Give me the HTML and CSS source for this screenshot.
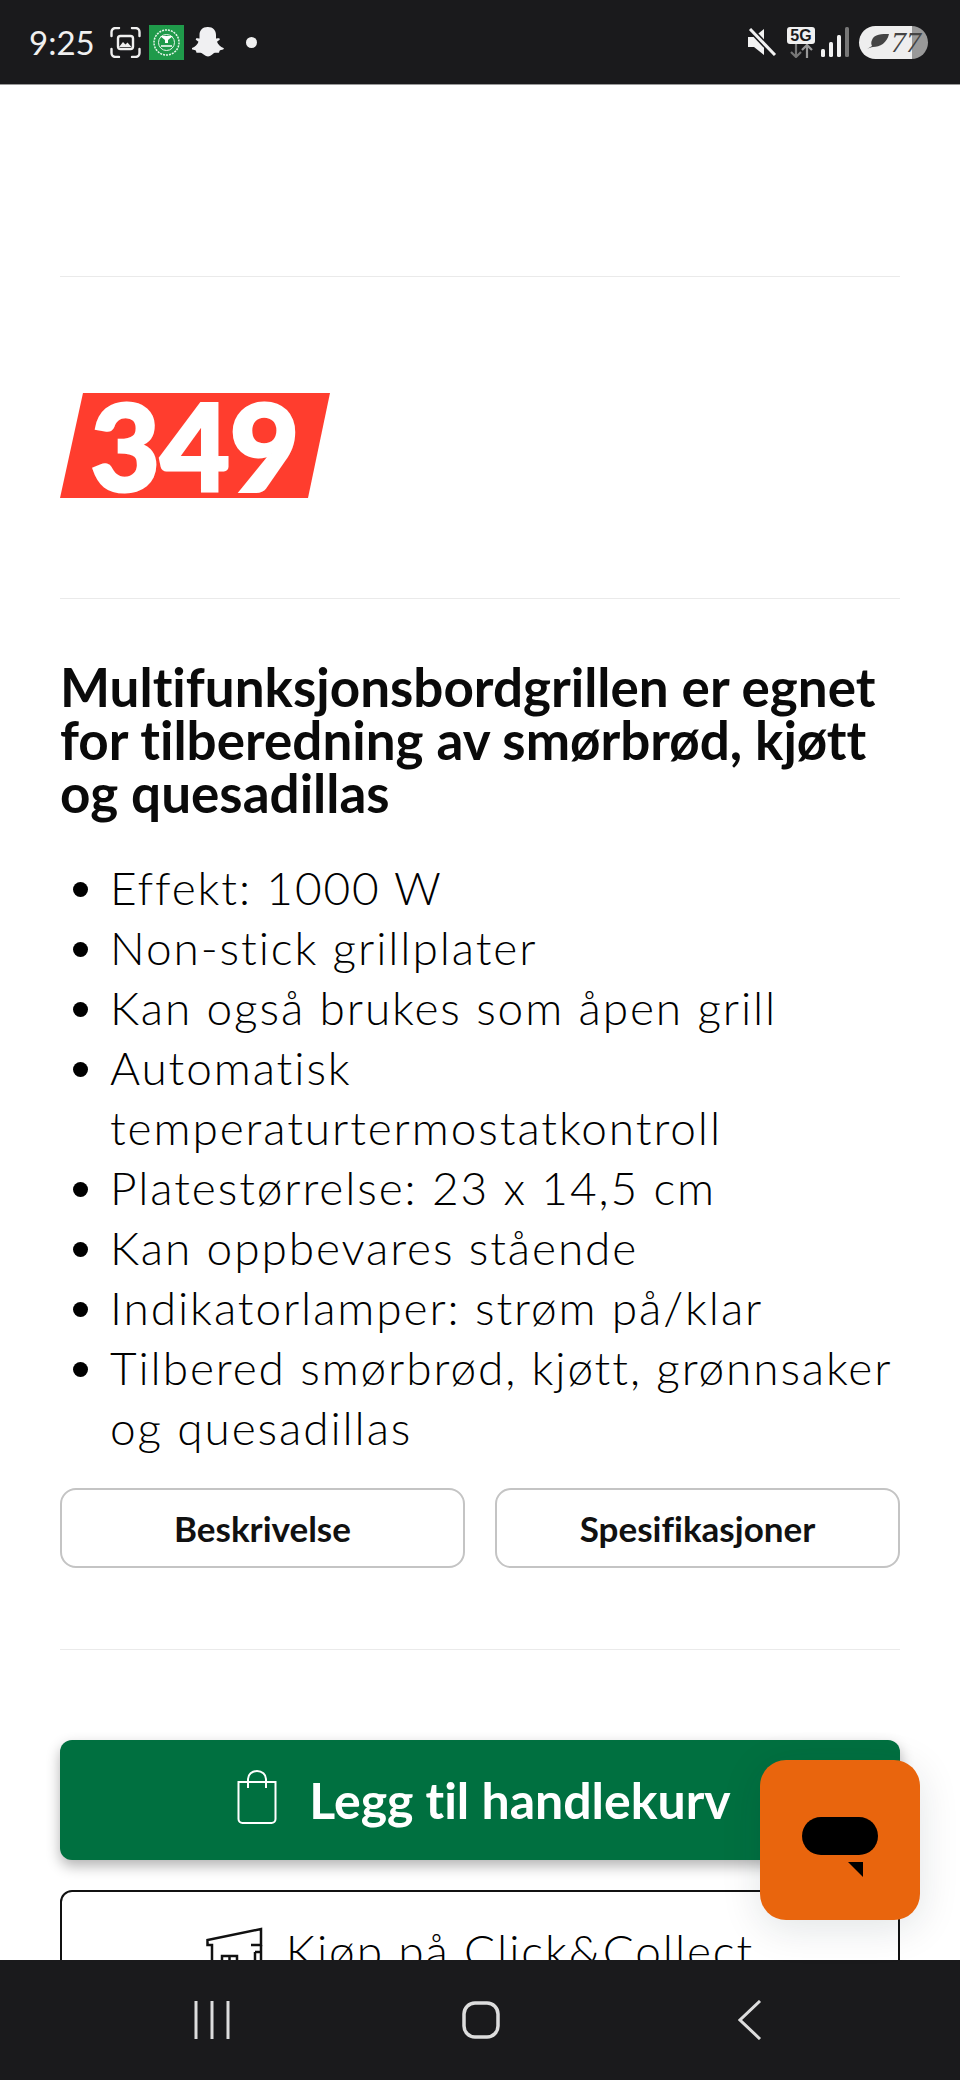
FILE: index.html
```html
<!DOCTYPE html>
<html lang="en">
<head>
    <meta charset="UTF-8">
    <meta name="viewport" content="width=device-width, initial-scale=1.0">
    <title>Multifunksjonsbordgrill</title>
    <link rel="stylesheet" href="styles.css">
</head>
<body>
    <!-- Status bar -->
    <div class="statusBar">
        <div class="statusLeft">
            <span class="time">9:25</span>
            <svg class="shotIcon" width="31" height="31" viewBox="0 0 31 31" fill="none" stroke="#f0f0f0" stroke-width="2.4" stroke-linecap="round">
                <path d="M1.5 9V5a4 4 0 0 1 4-4H9M22 1h3.5a4 4 0 0 1 4 4v4M29.5 22v4a4 4 0 0 1-4 4H22M9 30H5.5a4 4 0 0 1-4-4v-4"/>
                <rect x="8" y="9" width="15" height="13" rx="2.5"/>
                <path d="M9 20l4-5 2.5 2.5 2-2 4 4.500z" fill="#f0f0f0" stroke="none"/>
            </svg>
            <svg class="appIcon" width="35" height="35" viewBox="0 0 35 35">
                <rect width="35" height="35" fill="#1f9a4a"/>
                <circle cx="17.500" cy="17.500" r="12.500" fill="none" stroke="#e8f5ec" stroke-width="1.500" stroke-dasharray="2 1"/>
                <circle cx="17.500" cy="17.500" r="8" fill="none" stroke="#e8f5ec" stroke-width="1"/>
                <path d="M11 11h13l-5 4v3h-3v-3z" fill="#fff"/>
                <path d="M12 21h11" stroke="#fff" stroke-width="1.500"/>
            </svg>
            <svg class="snapIcon" width="32" height="30" viewBox="0 0 32 30">
                <path d="M16 0c5 0 8 3.500 8 8v3.500c1.500.3 3-.8 3.700.4.600 1.200-2 2-2.700 2.800 1 3 3.500 5.200 6.500 6.300.6.300.4 1.200-.4 1.500-1.300.6-3 .6-3.500 1.200-.4.600-.2 1.800-.9 2-1.300.3-3-.4-4.700.4C20.500 27 19 29.500 16 29.500S11.500 27 9.500 26.100c-1.700-.8-3.400-.1-4.700-.4-.7-.2-.5-1.400-.9-2-.5-.6-2.200-.6-3.500-1.200-.8-.3-1-1.200-.4-1.500 3-1.100 5.500-3.300 6.500-6.300-.7-.8-3.300-1.600-2.700-2.800.7-1.200 2.200-.1 3.700-.4V8c0-4.500 3-8 8-8z" fill="#f0f0f2"/>
            </svg>
            <span class="dot"></span>
        </div>
        <div class="statusRight">
            <svg class="muteIcon" width="30" height="28" viewBox="0 0 30 28">
                <path d="M1 9h6l10-8v26L7 19H1z" fill="#f2f2f2"/>
                <path d="M3 1l25 26" stroke="#1a1a1c" stroke-width="6"/>
                <path d="M3 1l25 26" stroke="#f2f2f2" stroke-width="3"/>
            </svg>
            <div class="netIcon">
                <span class="fiveG">5G</span>
                <svg width="28" height="14" viewBox="0 0 28 14" fill="none" stroke-width="2.200">
                    <path d="M9 0v13M4 8l5 5 5-5" stroke="#777"/>
                    <path d="M20 14V1M15 6l5-5 5 5" stroke="#999"/>
                </svg>
            </div>
            <svg class="signalIcon" width="28" height="30" viewBox="0 0 28 30">
                <rect x="0" y="22" width="4" height="8" rx="1.500" fill="#f2f2f2"/>
                <rect x="8" y="15" width="4" height="15" rx="1.500" fill="#f2f2f2"/>
                <rect x="16" y="8" width="4" height="22" rx="1.500" fill="#f2f2f2"/>
                <rect x="24" y="0" width="4" height="30" rx="1.500" fill="#777"/>
            </svg>
            <div class="battery">
                <svg width="24" height="16" viewBox="0 0 24 16">
                    <path d="M1 15c2-1 4-2 6-2 7 0 14-4 16-13-7 0-15 0-17 6-1 2-1 4 0 6z" fill="#444"/>
                </svg>
                <span class="batteryLevel">77</span>
            </div>
        </div>
    </div>

    <!-- Page content -->
    <div class="content">
        <hr class="rule firstRule">
        <div class="priceTag">349</div>
        <hr class="rule">
        <h1>Multifunksjonsbordgrillen er egnet for tilberedning av smørbrød, kjøtt og quesadillas</h1>
        <ul class="features">
            <li>Effekt: 1000 W</li>
            <li>Non-stick grillplater</li>
            <li>Kan også brukes som åpen grill</li>
            <li>Automatisk temperaturtermostatkontroll</li>
            <li>Platestørrelse: 23 x 14,5 cm</li>
            <li>Kan oppbevares stående</li>
            <li>Indikatorlamper: strøm på/klar</li>
            <li>Tilbered smørbrød, kjøtt, grønnsaker og quesadillas</li>
        </ul>
        <div class="infoButtons">
            <button>Beskrivelse</button>
            <button>Spesifikasjoner</button>
        </div>
        <hr class="rule buyRule">
        <button class="buyButton">
            <svg class="bagIcon" width="40" height="54" viewBox="0 0 40 54" fill="none" stroke="#fff" stroke-width="2">
                <path d="M1.500 12h37v37a4 4 0 0 1-4 4h-29a4 4 0 0 1-4-4z"/>
                <path d="M11 18V9a9 8 0 0 1 18 0v9"/>
            </svg>
            Legg til handlekurv
        </button>
        <button class="collectButton">
            <svg width="57" height="48" viewBox="0 0 57 48" fill="none" stroke="#111" stroke-width="2.500">
                <path d="M6 48V19H1.500v-5L55 3v16H45"/>
                <path d="M55 19v29M49 26h6M49 26v22M16 48V30h15v18M23.500 30v18"/>
            </svg>
            Kjøp på Click&amp;Collect
        </button>
    </div>

    <!-- Navigation bar -->
    <div class="navBar">
        <svg width="36" height="38" viewBox="0 0 36 38" stroke="#ddd" stroke-width="3">
            <path d="M2 0v38M18 0v38M34 0v38"/>
        </svg>
        <svg class="homeIcon" width="38" height="38" viewBox="0 0 38 38" fill="none" stroke="#ddd" stroke-width="3.500">
            <rect x="2" y="2" width="34" height="34" rx="11"/>
        </svg>
        <svg width="24" height="40" viewBox="0 0 24 40" fill="none" stroke="#ddd" stroke-width="3">
            <path d="M22 1L2 20l20 19"/>
        </svg>
    </div>

    <!-- Chat button -->
    <div class="chatButton">
        <svg width="76" height="62" viewBox="0 0 76 62">
            <rect x="0" y="0" width="76" height="38" rx="19"/>
            <path d="M46 45h15v15z"/>
        </svg>
    </div>
</body>
</html>
```

FILE: styles.css
```css
/* General Styles */
body {
    font-family: 'Lato', sans-serif;
    font-variant-ligatures: none;
    margin: 0;
    width: 960px;
    height: 2080px;
    display: flex;
    flex-direction: column;
    overflow: hidden;
    background: #fff;
    color: #111;
    position: relative;
}

/* Status bar */
.statusBar {
    height: 85px;
    flex-shrink: 0;
    background: #1a1a1c;
    border-bottom: 1px solid #999;
    box-sizing: border-box;
    display: flex;
    justify-content: space-between;
    align-items: center;
    padding: 0 32px 0 29px;
}

.statusLeft,
.statusRight {
    display: flex;
    align-items: center;
}

.time {
    font-size: 33px;
    color: #f0f0f0;
    width: 81px;
}

.appIcon {
    margin-left: 8px;
}

.snapIcon {
    margin-left: 8px;
}

.dot {
    width: 11px;
    height: 11px;
    border-radius: 50%;
    background: #f0f0f0;
    margin-left: 22px;
}

.netIcon {
    display: flex;
    flex-direction: column;
    align-items: center;
    margin-left: 10px;
}

.fiveG {
    background: #f0f0f0;
    color: #1a1a1c;
    font-family: 'Liberation Sans', sans-serif;
    font-weight: 700;
    font-size: 16px;
    line-height: 17px;
    width: 28px;
    text-align: center;
    border-radius: 3px;
}

.signalIcon {
    margin-left: 6px;
}

.battery {
    width: 69px;
    height: 33px;
    margin-left: 10px;
    border-radius: 17px;
    background: linear-gradient(to right, #eee 53px, #999 53px);
    display: flex;
    align-items: center;
    justify-content: center;
    gap: 1px;
    color: #444;
}

.batteryLevel {
    font-family: 'Liberation Serif', serif;
    font-style: italic;
    font-size: 30px;
    line-height: 1;
}

/* Page content */
.content {
    flex: 1;
    min-height: 0;
    overflow: hidden;
    padding: 0 60px;
}

.rule {
    border: none;
    border-top: 1px solid #eaeaea;
    margin: 0;
}

.firstRule {
    margin-top: 191px;
}

.priceTag {
    width: 270px;
    height: 105px;
    margin: 116px 0 100px;
    background: #ff3d2e;
    clip-path: polygon(23px 0, 270px 0, 248px 100%, 0 100%);
    color: #fff;
    font-weight: 900;
    font-size: 120px;
    -webkit-text-stroke: 3px #fff;
    line-height: 105px;
    text-align: center;
}

h1 {
    font-weight: 700;
    font-size: 53px;
    line-height: 53px;
    margin: 61px 0 39px;
    color: #0a0a0a;
}

.features {
    font-size: 46px;
    font-weight: 300;
    letter-spacing: 1.9px;
    color: #000;
    line-height: 60px;
    margin: 0 0 30px;
    padding-left: 50px;
}

.infoButtons {
    display: grid;
    grid-template-columns: 1fr 1fr;
    gap: 30px;
}

.infoButtons button {
    height: 80px;
    background: #fff;
    border: 2px solid #c4c4c4;
    border-radius: 16px;
    color: #111;
    font-family: inherit;
    font-variant-ligatures: none;
    font-weight: 700;
    font-size: 35px;
}

.buyRule {
    margin-top: 81px;
}

.buyButton,
.collectButton {
    width: 100%;
    display: flex;
    align-items: center;
    justify-content: center;
    font-family: inherit;
    font-variant-ligatures: none;
    cursor: pointer;
}

.buyButton {
    height: 120px;
    margin-top: 90px;
    padding-left: 14px;
    background: #007040;
    border: none;
    border-radius: 12px;
    box-shadow: 0 6px 14px rgba(0, 0, 0, 0.3);
    color: #fff;
    font-weight: 700;
    font-size: 50px;
    gap: 32px;
}

.bagIcon {
    margin-bottom: 6px;
}

.collectButton {
    height: 120px;
    margin-top: 30px;
    background: #fff;
    border: 2px solid #111;
    border-radius: 12px;
    color: #000;
    font-weight: 300;
    font-size: 46px;
    letter-spacing: 1.9px;
    gap: 23px;
}

/* Navigation bar */
.navBar {
    height: 120px;
    flex-shrink: 0;
    background: #1a1a1c;
    box-sizing: border-box;
    padding: 0 198px 0 194px;
    display: flex;
    justify-content: space-between;
    align-items: center;
}

.homeIcon {
    margin-right: 6px;
}

/* Chat button */
.chatButton {
    position: absolute;
    left: 760px;
    top: 1760px;
    width: 160px;
    height: 160px;
    border-radius: 26px;
    background: #e9650d;
    box-shadow: 0 8px 40px rgba(0, 30, 40, 0.12);
    display: flex;
    align-items: flex-start;
    justify-content: center;
    box-sizing: border-box;
    padding-top: 57px;
}
```
